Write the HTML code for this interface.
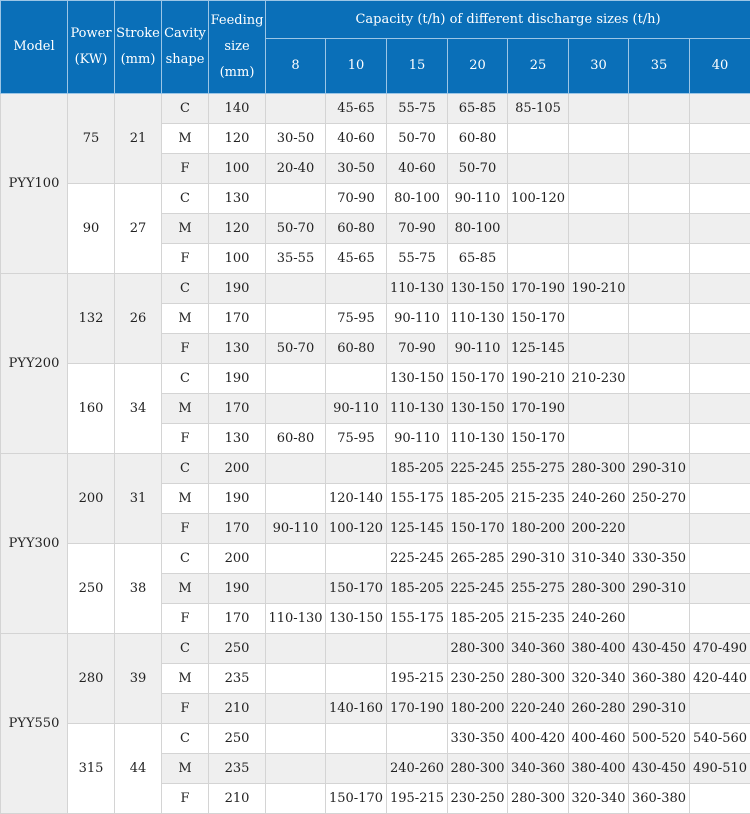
<!DOCTYPE html>
<html><head><meta charset="utf-8"><style>
html,body{margin:0;padding:0;background:#fff;}
table{border-collapse:collapse;table-layout:fixed;width:750px;font-family:"DejaVu Serif",serif;font-size:13px;color:#222;}
td,th{border:1px solid #d4d4d4;text-align:center;padding:0;overflow:hidden;white-space:nowrap;}
th{background:#0a6fb8;color:#fff;font-weight:normal;border-color:#9cc6e6;line-height:26px;font-size:13px;}
tr.d td{height:29px;}
tr.g td{background:#efefef;}
td.m{background:#efefef;}
</style></head><body>
<table>
<colgroup><col style="width:67px"><col style="width:47px"><col style="width:47px"><col style="width:47px"><col style="width:57px"><col style="width:60px"><col style="width:61px"><col style="width:61px"><col style="width:60px"><col style="width:61px"><col style="width:60px"><col style="width:61px"><col style="width:61px"></colgroup>
<tr style="height:38px"><th rowspan="2">Model</th><th rowspan="2">Power<br>(KW)</th><th rowspan="2">Stroke<br>(mm)</th><th rowspan="2">Cavity<br>shape</th><th rowspan="2">Feeding<br>size<br>(mm)</th><th colspan="8">Capacity (t/h) of different discharge sizes (t/h)</th></tr>
<tr style="height:55px"><th>8</th><th>10</th><th>15</th><th>20</th><th>25</th><th>30</th><th>35</th><th>40</th></tr>

<tr class="d g"><td class="m" rowspan="6">PYY100</td><td rowspan="3">75</td><td rowspan="3">21</td><td>C</td><td>140</td><td></td><td>45-65</td><td>55-75</td><td>65-85</td><td>85-105</td><td></td><td></td><td></td></tr>
<tr class="d"><td>M</td><td>120</td><td>30-50</td><td>40-60</td><td>50-70</td><td>60-80</td><td></td><td></td><td></td><td></td></tr>
<tr class="d g"><td>F</td><td>100</td><td>20-40</td><td>30-50</td><td>40-60</td><td>50-70</td><td></td><td></td><td></td><td></td></tr>
<tr class="d"><td rowspan="3">90</td><td rowspan="3">27</td><td>C</td><td>130</td><td></td><td>70-90</td><td>80-100</td><td>90-110</td><td>100-120</td><td></td><td></td><td></td></tr>
<tr class="d g"><td>M</td><td>120</td><td>50-70</td><td>60-80</td><td>70-90</td><td>80-100</td><td></td><td></td><td></td><td></td></tr>
<tr class="d"><td>F</td><td>100</td><td>35-55</td><td>45-65</td><td>55-75</td><td>65-85</td><td></td><td></td><td></td><td></td></tr>

<tr class="d g"><td class="m" rowspan="6">PYY200</td><td rowspan="3">132</td><td rowspan="3">26</td><td>C</td><td>190</td><td></td><td></td><td>110-130</td><td>130-150</td><td>170-190</td><td>190-210</td><td></td><td></td></tr>
<tr class="d"><td>M</td><td>170</td><td></td><td>75-95</td><td>90-110</td><td>110-130</td><td>150-170</td><td></td><td></td><td></td></tr>
<tr class="d g"><td>F</td><td>130</td><td>50-70</td><td>60-80</td><td>70-90</td><td>90-110</td><td>125-145</td><td></td><td></td><td></td></tr>
<tr class="d"><td rowspan="3">160</td><td rowspan="3">34</td><td>C</td><td>190</td><td></td><td></td><td>130-150</td><td>150-170</td><td>190-210</td><td>210-230</td><td></td><td></td></tr>
<tr class="d g"><td>M</td><td>170</td><td></td><td>90-110</td><td>110-130</td><td>130-150</td><td>170-190</td><td></td><td></td><td></td></tr>
<tr class="d"><td>F</td><td>130</td><td>60-80</td><td>75-95</td><td>90-110</td><td>110-130</td><td>150-170</td><td></td><td></td><td></td></tr>

<tr class="d g"><td class="m" rowspan="6">PYY300</td><td rowspan="3">200</td><td rowspan="3">31</td><td>C</td><td>200</td><td></td><td></td><td>185-205</td><td>225-245</td><td>255-275</td><td>280-300</td><td>290-310</td><td></td></tr>
<tr class="d"><td>M</td><td>190</td><td></td><td>120-140</td><td>155-175</td><td>185-205</td><td>215-235</td><td>240-260</td><td>250-270</td><td></td></tr>
<tr class="d g"><td>F</td><td>170</td><td>90-110</td><td>100-120</td><td>125-145</td><td>150-170</td><td>180-200</td><td>200-220</td><td></td><td></td></tr>
<tr class="d"><td rowspan="3">250</td><td rowspan="3">38</td><td>C</td><td>200</td><td></td><td></td><td>225-245</td><td>265-285</td><td>290-310</td><td>310-340</td><td>330-350</td><td></td></tr>
<tr class="d g"><td>M</td><td>190</td><td></td><td>150-170</td><td>185-205</td><td>225-245</td><td>255-275</td><td>280-300</td><td>290-310</td><td></td></tr>
<tr class="d"><td>F</td><td>170</td><td>110-130</td><td>130-150</td><td>155-175</td><td>185-205</td><td>215-235</td><td>240-260</td><td></td><td></td></tr>

<tr class="d g"><td class="m" rowspan="6">PYY550</td><td rowspan="3">280</td><td rowspan="3">39</td><td>C</td><td>250</td><td></td><td></td><td></td><td>280-300</td><td>340-360</td><td>380-400</td><td>430-450</td><td>470-490</td></tr>
<tr class="d"><td>M</td><td>235</td><td></td><td></td><td>195-215</td><td>230-250</td><td>280-300</td><td>320-340</td><td>360-380</td><td>420-440</td></tr>
<tr class="d g"><td>F</td><td>210</td><td></td><td>140-160</td><td>170-190</td><td>180-200</td><td>220-240</td><td>260-280</td><td>290-310</td><td></td></tr>
<tr class="d"><td rowspan="3">315</td><td rowspan="3">44</td><td>C</td><td>250</td><td></td><td></td><td></td><td>330-350</td><td>400-420</td><td>400-460</td><td>500-520</td><td>540-560</td></tr>
<tr class="d g"><td>M</td><td>235</td><td></td><td></td><td>240-260</td><td>280-300</td><td>340-360</td><td>380-400</td><td>430-450</td><td>490-510</td></tr>
<tr class="d"><td>F</td><td>210</td><td></td><td>150-170</td><td>195-215</td><td>230-250</td><td>280-300</td><td>320-340</td><td>360-380</td><td></td></tr>
</table>
</body></html>
